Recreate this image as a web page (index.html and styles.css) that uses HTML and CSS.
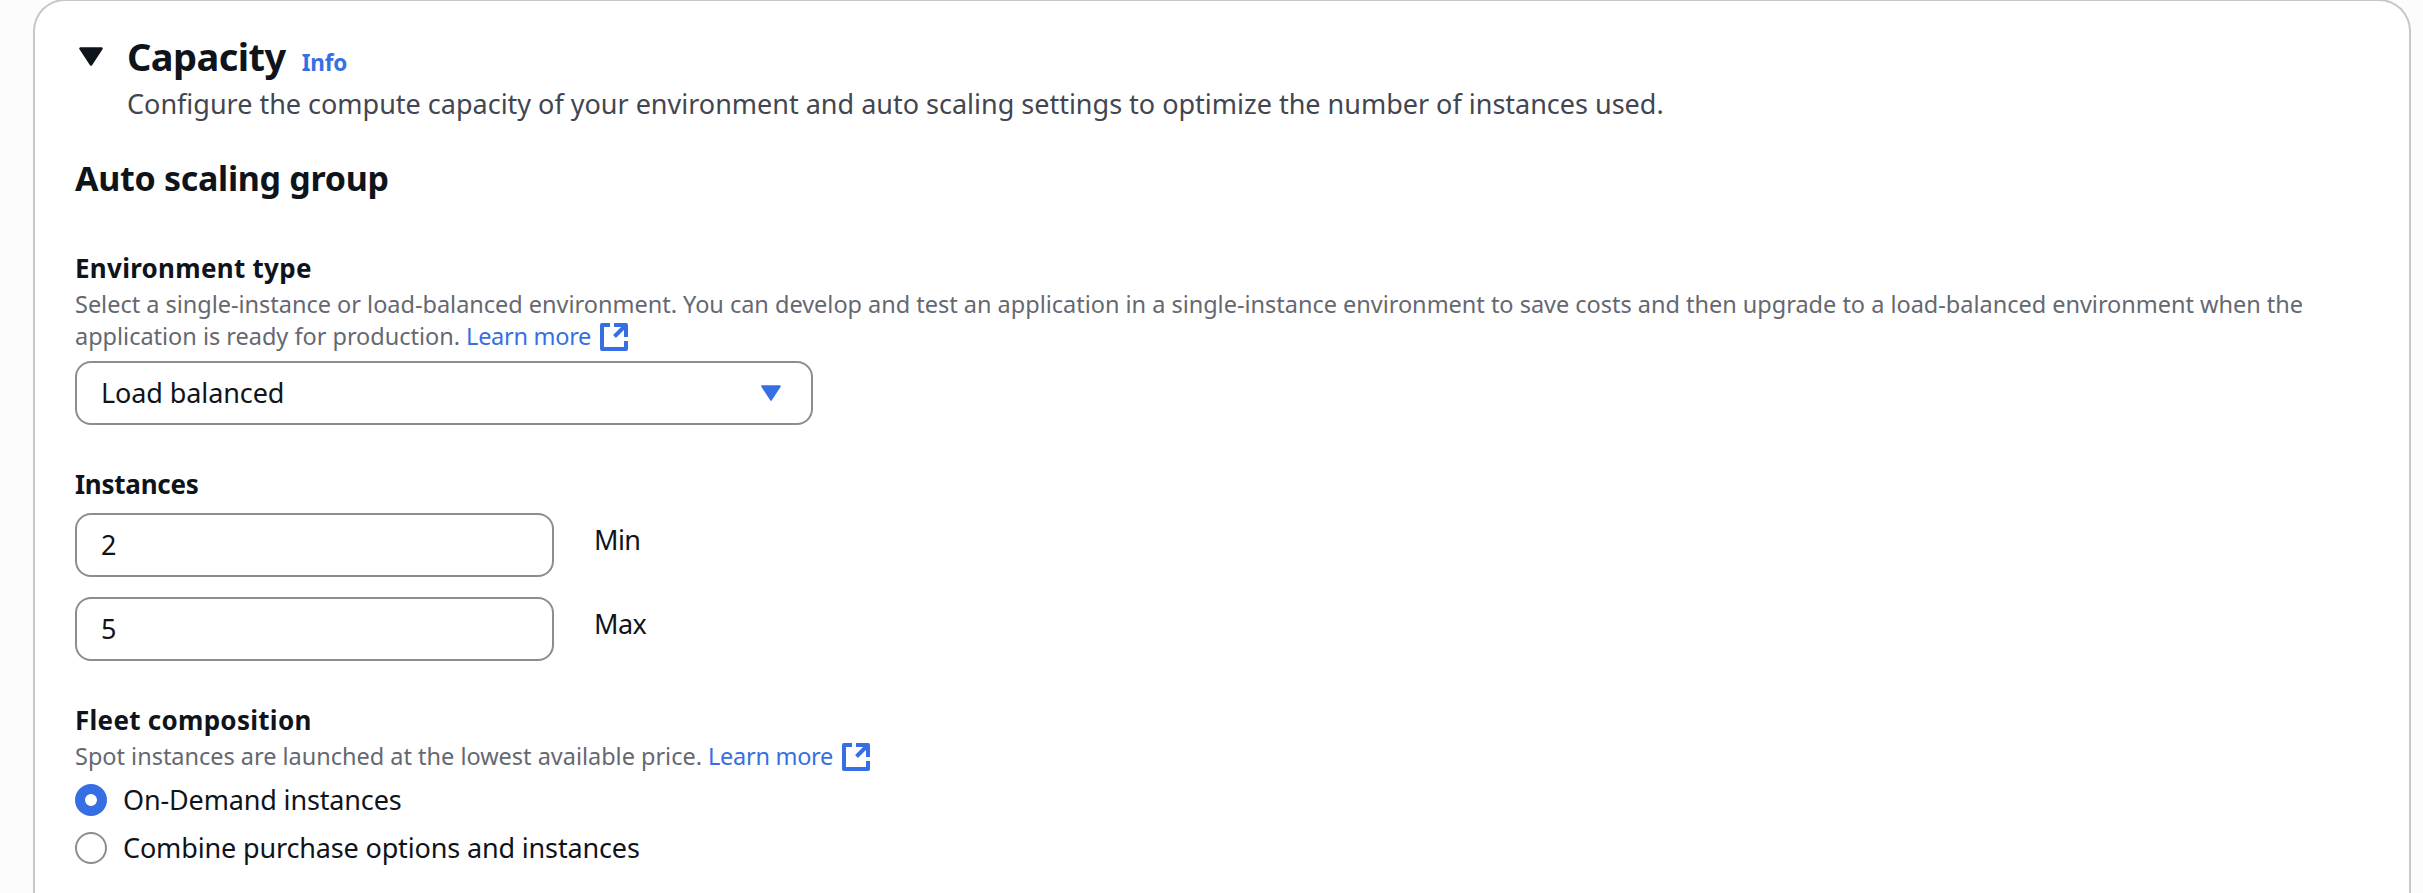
FILE: index.html
```html
<!DOCTYPE html>
<html lang="en">
<head>
<meta charset="utf-8">
<title>Capacity</title>
<link rel="stylesheet" href="styles.css">
</head>
<body>
<main class="card">
  <header class="card-header">
    <svg class="toggle" viewBox="0 0 24 19"><path d="M1.500 1.500h21L12 17.500z" fill="#0f141a" stroke="#0f141a" stroke-width="2.500" stroke-linejoin="round"/></svg>
    <div>
      <div class="title-row"><h1 class="title">Capacity</h1><a class="info">Info</a></div>
      <p class="subtitle">Configure the compute capacity of your environment and auto scaling settings to optimize the number of instances used.</p>
    </div>
  </header>
  <h2 class="group-title">Auto scaling group</h2>

  <section class="field environment">
    <h3 class="label">Environment type</h3>
    <p class="hint">Select a single-instance or load-balanced environment. You can develop and test an application in a single-instance environment to save costs and then upgrade to a load-balanced environment when the<br>application is ready for production. <a class="link">Learn more<svg class="external" viewBox="0 0 28 28"><path d="M10 2H2v24h24v-8M14 2h12v12M26 2L14.500 13.500" fill="none" stroke="currentColor" stroke-width="4" stroke-linejoin="round"/></svg></a></p>
    <div class="control select"><span>Load balanced</span><svg class="caret" viewBox="0 0 20 16"><path d="M1.200 1.200h17.600L10 14.800z" fill="currentColor" stroke="currentColor" stroke-width="2" stroke-linejoin="round"/></svg></div>
  </section>

  <section class="field instances">
    <h3 class="label">Instances</h3>
    <div class="instance-row"><div class="control number">2</div><div class="unit">Min</div></div>
    <div class="instance-row"><div class="control number">5</div><div class="unit">Max</div></div>
  </section>

  <section class="field fleet">
    <h3 class="label">Fleet composition</h3>
    <p class="hint">Spot instances are launched at the lowest available price. <a class="link">Learn more<svg class="external" viewBox="0 0 28 28"><path d="M10 2H2v24h24v-8M14 2h12v12M26 2L14.500 13.500" fill="none" stroke="currentColor" stroke-width="4" stroke-linejoin="round"/></svg></a></p>
    <div class="options">
      <div class="option"><i class="radio checked"></i><span>On-Demand instances</span></div>
      <div class="option"><i class="radio"></i><span>Combine purchase options and instances</span></div>
    </div>
  </section>
</main>
</body>
</html>
```
FILE: styles.css
```css
* { box-sizing: border-box; }
body {
  margin: 0;
  height: 893px;
  overflow: hidden;
  background: #fcfcfd;
  color: #0f141a;
  font: 27px/40px "Noto Sans", "Open Sans", sans-serif;
}
h1, h2, h3, p { margin: 0; }
.card {
  height: 894px;
  margin: -1px 12px 0 33px;
  padding: 31px 40px 0;
  border: 2px solid #c6c6cd;
  border-bottom: 0;
  border-radius: 32px 32px 0 0;
  background: #fff;
}
.card-header { display: flex; gap: 24px; }
.toggle { width: 24px; height: 19px; margin: 15px 0 0 4px; flex: none; }
.title-row { display: flex; align-items: baseline; gap: 16px; height: 48px; }
.title { font-size: 38px; line-height: 48px; letter-spacing: -0.550px; }
.info { color: #356fe3; font-size: 22.500px; font-weight: 700; letter-spacing: -0.200px; }
.subtitle { margin-top: 4px; color: #424650; letter-spacing: -0.007px; white-space: nowrap; }
.group-title { margin-top: 32px; font-size: 34px; line-height: 44px; letter-spacing: -0.300px; }
.label { font-size: 26px; line-height: 36px; letter-spacing: 0.280px; }
.instances .label { letter-spacing: -0.250px; }
.hint { margin-top: 2px; color: #656871; font-size: 23.500px; line-height: 32px; letter-spacing: -0.016px; white-space: nowrap; }
.link { color: #356fe3; letter-spacing: -0.280px; }
.external { width: 28px; height: 28px; margin: -4px 0 0 9px; vertical-align: -6px; }
.environment { margin-top: 50px; }
.control { height: 64px; border: 2px solid #8c8c94; border-radius: 16px; padding: 0 24px; display: flex; align-items: center; letter-spacing: -0.100px; }
.select { width: 738px; margin-top: 9px; padding-right: 30px; justify-content: space-between; }
.caret { width: 20px; height: 16px; color: #356fe3; }
.instances { margin-top: 41px; }
.instance-row { display: flex; gap: 40px; margin-top: 20px; }
.label + .instance-row { margin-top: 11px; }
.number { width: 479px; }
.unit { padding-top: 7px; letter-spacing: -0.600px; }
.fleet { margin-top: 41px; }
.options { display: flex; flex-direction: column; gap: 8px; margin-top: 8px; }
.option { display: flex; align-items: center; gap: 16px; letter-spacing: -0.150px; }
.radio { width: 32px; height: 32px; border: 2px solid #8c8c94; border-radius: 50%; }
.radio.checked { border: 10px solid #356fe3; }
```
